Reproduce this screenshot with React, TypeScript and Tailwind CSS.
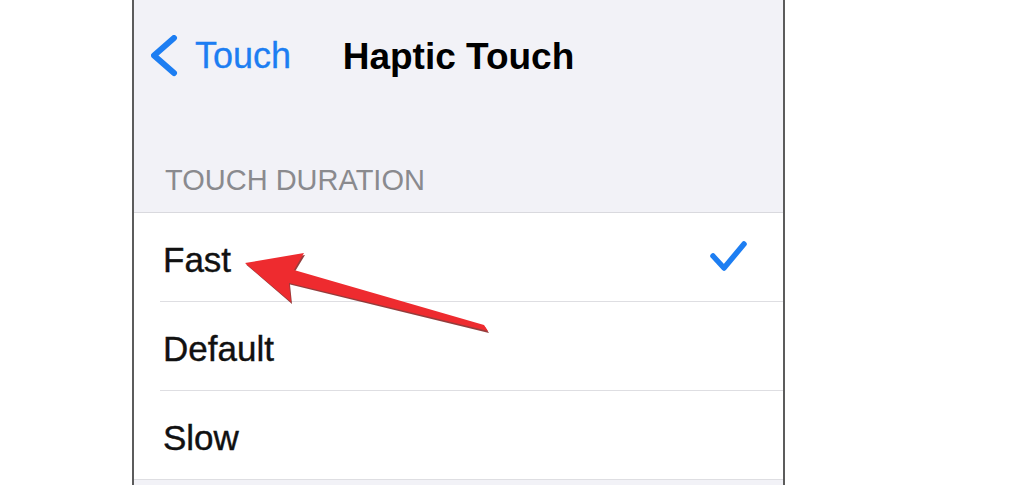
import React from 'react';

const options = [
  { label: 'Fast', selected: true },
  { label: 'Default', selected: false },
  { label: 'Slow', selected: false },
];

const BackChevron = () => (
  <svg width="28" height="42" viewBox="0 0 28 42" fill="none">
    <path d="M23 3 L3 20.5 L23 38" stroke="#1d7ef2" strokeWidth="6" strokeLinecap="round" strokeLinejoin="round" />
  </svg>
);

const Check = () => (
  <svg width="40" height="36" viewBox="0 0 40 36" fill="none">
    <path d="M4 17 L15 29 L35 5" stroke="#1d7ef2" strokeWidth="5.5" strokeLinecap="round" strokeLinejoin="round" />
  </svg>
);

// red callout arrow drawn over the list, page coordinates
const Arrow = () => (
  <svg className="absolute left-0 top-0 pointer-events-none" width="1024" height="485" viewBox="0 0 1024 485">
    <polygon
      points="246,264.5 305,255 295,271.5 485,327 489,333 290,284.5 292,304"
      fill="#7a0d0d"
      opacity="0.8"
    />
    <polygon
      points="245,263 304,253 294,270 484,325 488,331 289,283 291,302"
      fill="#ee2b2f"
    />
  </svg>
);

export default function App() {
  return (
    <div className="relative w-full h-[485px] bg-white overflow-hidden" style={{ fontFamily: '"Liberation Sans", Arial, sans-serif' }}>
      <div className="ml-[132px] w-[653px] h-full border-x-2 border-[#5c5c5c] bg-[#f2f2f7]">
        {/* nav bar */}
        <div className="h-[112px] grid grid-cols-[1fr_auto_1fr] items-center">
          <div className="flex items-center pl-[17px] gap-[16px]">
            <BackChevron />
            <span className="text-[36px] leading-none text-[#1d7ef2] [-webkit-text-stroke:0.3px_#1d7ef2]">Touch</span>
          </div>
          <h1 className="text-[37px] leading-none font-bold text-black">Haptic Touch</h1>
          <div />
        </div>

        {/* section header */}
        <div className="h-[100px] flex flex-col justify-end pb-[17px] pl-[31px]">
          <span className="text-[29px] leading-none text-[#8a8a8e]">TOUCH DURATION</span>
        </div>

        {/* options list */}
        <div className="bg-white border-t border-[#d9d9de]">
          {options.map((o, i) => (
            <div
              key={o.label}
              className={`h-[89px] flex items-center justify-between border-b border-[#dedee2] ${i === options.length - 1 ? 'pl-[29px]' : 'ml-[26px] pl-[3px]'} pr-[34px]`}
            >
              <span className="text-[35px] leading-none pt-[4px] text-[#111111] [-webkit-text-stroke:0.4px_#111111]">{o.label}</span>
              {o.selected && <Check />}
            </div>
          ))}
        </div>
      </div>
      <Arrow />
    </div>
  );
}
